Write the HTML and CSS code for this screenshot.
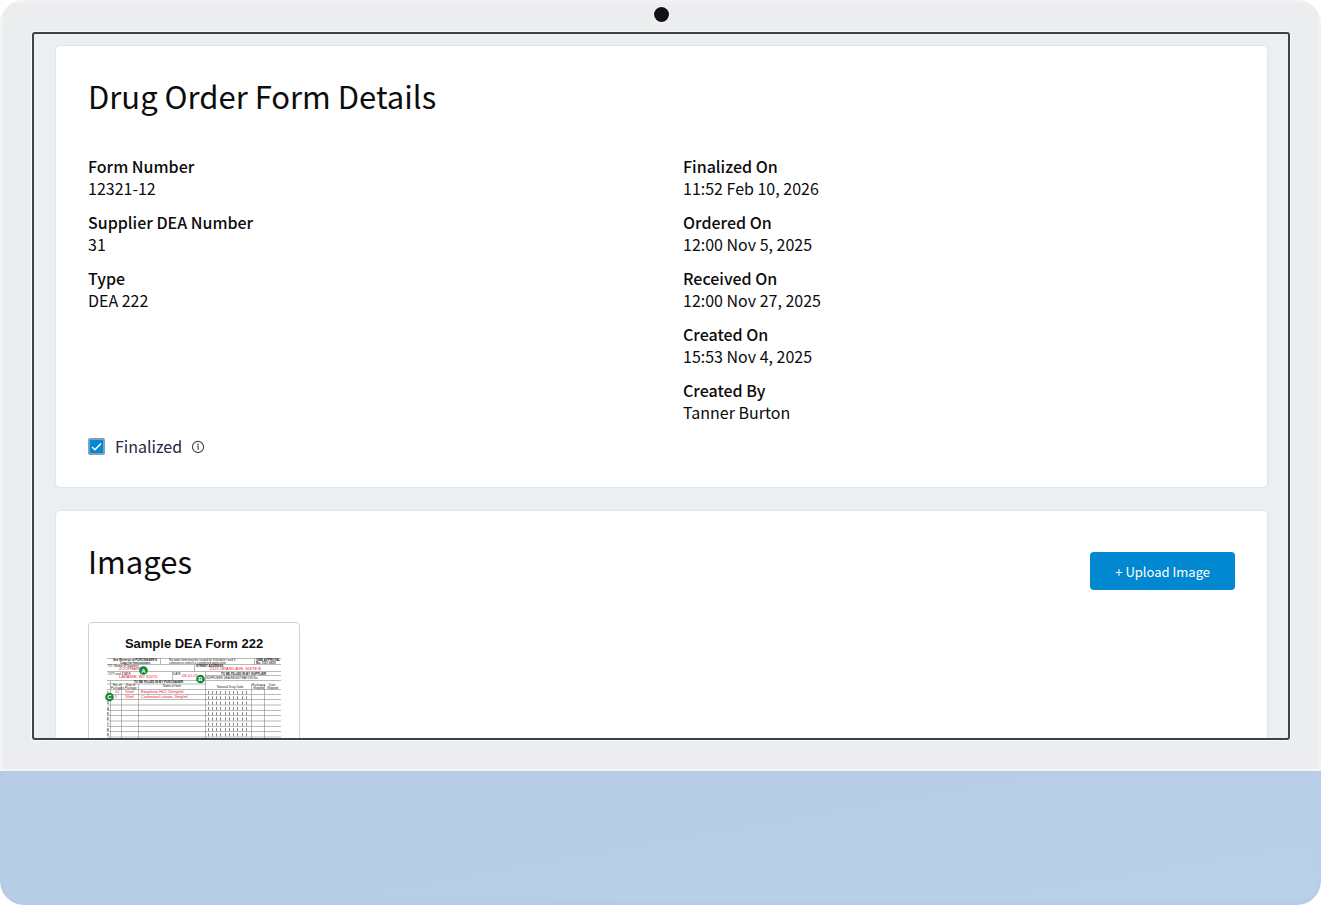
FILE: index.html
```html
<!DOCTYPE html>
<html lang="en">
<head>
    <meta charset="UTF-8">
    <meta name="viewport" content="width=device-width, initial-scale=1.0">
    <title>Drug Order Form Details</title>
    <link rel="stylesheet" href="styles.css">
</head>
<body>
    <div class="monitor">
        <div class="bezel">
            <div class="camera-bar"><span class="camera"></span></div>

            <main class="screen">
                <section class="card details">
                    <h1 class="card-title">Drug Order Form Details</h1>

                    <div class="detail-columns">
                        <dl class="detail-list">
                            <div><dt>Form Number</dt><dd>12321-12</dd></div>
                            <div><dt>Supplier DEA Number</dt><dd>31</dd></div>
                            <div><dt>Type</dt><dd>DEA 222</dd></div>
                        </dl>
                        <dl class="detail-list">
                            <div><dt>Finalized On</dt><dd>11:52 Feb 10, 2026</dd></div>
                            <div><dt>Ordered On</dt><dd>12:00 Nov 5, 2025</dd></div>
                            <div><dt>Received On</dt><dd>12:00 Nov 27, 2025</dd></div>
                            <div><dt>Created On</dt><dd>15:53 Nov 4, 2025</dd></div>
                            <div><dt>Created By</dt><dd>Tanner Burton</dd></div>
                        </dl>
                    </div>

                    <div class="finalized">
                        <input type="checkbox" id="finalized" class="checkbox" checked>
                        <label for="finalized">Finalized</label>
                        <svg class="info-icon" viewBox="0 0 14 14" aria-hidden="true">
                            <circle cx="7" cy="7" r="5.6" fill="none" stroke="#444" stroke-width="1.1"/>
                            <circle cx="7" cy="4.4" r="0.8" fill="#444"/>
                            <path d="M6.2 6.4H7.1V10" fill="none" stroke="#444" stroke-width="1.1"/>
                        </svg>
                    </div>
                </section>

                <section class="card images">
                    <header class="images-header">
                        <h2 class="card-title">Images</h2>
                        <button type="button" class="upload-button">+ Upload Image</button>
                    </header>

                    <a href="#" class="thumbnail">
                        <svg viewBox="0 0 210 270" role="img" aria-label="Sample DEA Form 222">
                            <text class="form-title" x="105" y="25" text-anchor="middle">Sample DEA Form 222</text>

                            <!-- header rules -->
                            <g class="rule">
                                <path d="M18 35.5H192M18 41.5H192M18 48.5H192M18 57.5H192M116 52.5H192M18 61H116M18 66.5H192"/>
                                <path d="M71.5 35.5V41.5M165.5 35.5V41.5M105.5 41.5V48.5M83.5 48.5V57.5M116.5 48.5V57.5"/>
                            </g>

                            <!-- order lines -->
                            <g class="rule">
                                <path d="M18 71.5H192M18 76.5H192M18 82H192M18 87.5H192M18 92.5H192M18 98H192M18 103.5H192M18 108.5H192M18 114H192M18 119.5H192"/>
                                <path d="M21.5 57.5V122M32.5 61V122M49.5 61V122M116.5 57.5V122M162.5 61V122M175.5 61V122"/>
                            </g>
                            <path class="ticks" d="M119.5 68V122M123.5 68V122M127.5 68V122M131.5 68V122M136.5 68V122M140.5 68V122M144.5 68V122M148.5 68V122M153.5 68V122M157.5 68V122"/>

                            <g class="print bold">
                                <text x="24" y="38">See Reverse of PURCHASER'S</text>
                                <text x="31" y="41">Copy for Instructions</text>
                                <text x="167" y="38">OMB APPROVAL</text>
                                <text x="167" y="41">No. 1117-0010</text>
                                <text x="107" y="44">STREET ADDRESS</text>
                                <text x="45" y="60">TO BE FILLED IN BY PURCHASER</text>
                                <text x="132" y="52">TO BE FILLED IN BY SUPPLIER</text>
                            </g>
                            <g class="print">
                                <text x="80" y="38">No order form may be issued for Schedule I and II</text>
                                <text x="80" y="41">substances unless a completed application</text>
                                <text x="19" y="44">TO: (Name of Supplier)</text>
                                <text x="19" y="52">CITY and STATE</text>
                                <text x="84" y="52">DATE</text>
                                <text x="117" y="56">SUPPLIERS DEA REGISTRATION No.</text>
                                <text x="24" y="63">No. of</text>
                                <text x="22" y="66">Packages</text>
                                <text x="37" y="63">Size of</text>
                                <text x="36" y="66">Package</text>
                                <text x="74" y="64">Name of Item</text>
                                <text x="128" y="65">National Drug Code</text>
                                <text x="163" y="63">Packages</text>
                                <text x="164" y="66">Shipped</text>
                                <text x="180" y="63">Date</text>
                                <text x="178" y="66">Shipped</text>
                            </g>
                            <g class="print bold">
                                <text x="18" y="71">1</text>
                                <text x="18" y="76">2</text>
                                <text x="18" y="81">3</text>
                                <text x="18" y="87">4</text>
                                <text x="18" y="92">5</text>
                                <text x="18" y="97">6</text>
                                <text x="18" y="103">7</text>
                                <text x="18" y="108">8</text>
                                <text x="18" y="113">9</text>
                            </g>

                            <g class="entry">
                                <text x="30" y="47">ZOOPHARM</text>
                                <text x="121" y="47">2121 GRAND AVE, SUITE B</text>
                                <text x="30" y="55">LARAMIE, WY  82070</text>
                                <text x="93" y="54">08-01-05</text>
                                <text x="26" y="70">12</text>
                                <text x="36" y="70">10ml</text>
                                <text x="52" y="70">Etorphine HCl, 10mg/ml</text>
                                <text x="26" y="75">5</text>
                                <text x="36" y="75">10ml</text>
                                <text x="52" y="75">Carfentanil citrate, 3mg/ml</text>
                            </g>

                            <g class="marker">
                                <circle cx="54.5" cy="47.5" r="4.3"/>
                                <circle cx="111.5" cy="56" r="4.3"/>
                                <circle cx="20.5" cy="74" r="4.3"/>
                                <text x="54.5" y="49.6">A</text>
                                <text x="111.5" y="58.1">B</text>
                                <text x="20.5" y="76.1">C</text>
                            </g>
                        </svg>
                    </a>
                </section>
            </main>
        </div>
        <div class="chin"></div>
    </div>
</body>
</html>
```
FILE: styles.css
```css
* {
    box-sizing: border-box;
}

body {
    margin: 0;
    background: #fff;
    color: #0c0c0c;
    font-family: "Noto Sans CJK SC", "Noto Sans", sans-serif;
    font-size: 16px;
    line-height: 22px;
}

/* Monitor frame */
.monitor {
    display: flex;
    flex-direction: column;
    height: 100vh;
    border-radius: 24px;
    overflow: hidden;
}

.bezel {
    flex: 1;
    min-height: 0;
    display: flex;
    flex-direction: column;
    padding: 0 31px 31px 32px;
    background: #ecedef;
    box-shadow: inset 0 0 4px 1px #f8f9fb;
}

.camera-bar {
    flex: none;
    display: flex;
    align-items: center;
    justify-content: center;
    height: 32px;
    padding-bottom: 4px;
}

.camera {
    width: 15px;
    height: 15px;
    border-radius: 50%;
    background: #111316;
    box-shadow: 0 0 0 1px #fafafa;
}

.screen {
    flex: 1;
    min-height: 0;
    overflow: hidden;
    padding: 11px 20px 0 21px;
    background: #ebeff2;
    border: 2px solid #39434c;
    border-radius: 3px;
    box-shadow: 0 0 0 1px #f8f9fa;
}

.chin {
    flex: none;
    height: 134px;
    border-radius: 0 0 24px 24px;
    background: linear-gradient(170deg, #b7cce5 0%, #b8cee6 50%, #bbd0e9 100%);
    box-shadow: inset 0 -1px 3px 1px #b3cbea;
}

/* Cards */
.card {
    padding: 32px 32px 29px;
    margin-bottom: 22px;
    background: #fff;
    border: 1px solid #dfe5e9;
    border-radius: 5px;
}

.card-title {
    margin: 0;
    font-size: 31px;
    font-weight: 400;
    line-height: 36px;
}

.detail-columns {
    display: grid;
    grid-template-columns: 1fr 1fr;
    gap: 43px;
    margin: 41px 0 11px;
}

.detail-list {
    display: flex;
    flex-direction: column;
    gap: 12px;
    margin: 0;
}

.detail-list dt {
    font-weight: 500;
}

.detail-list dd {
    margin: 0;
}

.finalized {
    display: flex;
    align-items: center;
    height: 24px;
    color: #23283f;
}

.checkbox {
    appearance: none;
    width: 17px;
    height: 17px;
    margin: 0 10px 0 0;
    border: 2px solid #7ba0c0;
    border-radius: 2px;
    background: #fff;
}

.checkbox:checked {
    background: #0787d0 url("data:image/svg+xml,%3Csvg xmlns='http://www.w3.org/2000/svg' viewBox='0 0 13 13'%3E%3Cpath d='M2 7l3 2.8 6-6.3' fill='none' stroke='%23fff' stroke-width='1.4'/%3E%3C/svg%3E") center / 13px no-repeat;
}

.info-icon {
    width: 14px;
    height: 14px;
    margin: 2px 0 0 9px;
}

/* Images */
.images-header {
    display: flex;
    justify-content: space-between;
    height: 47px;
    margin-bottom: 32px;
}

.upload-button {
    align-self: flex-end;
    height: 38px;
    padding: 0 25px;
    border: 0;
    border-radius: 4px;
    background: #0288d1;
    color: #fff;
    font-family: inherit;
    font-size: 13px;
    cursor: pointer;
}

.thumbnail {
    display: block;
    width: 212px;
    border: 1px solid #cfd2d4;
    border-radius: 4px;
    overflow: hidden;
}

.thumbnail svg {
    display: block;
    font-family: "Liberation Sans", Arial, sans-serif;
}

.form-title {
    font-size: 13px;
    font-weight: 700;
    fill: #111;
}

.rule {
    fill: none;
    stroke: #888;
    stroke-width: 0.6;
}

.ticks {
    fill: none;
    stroke: #555;
    stroke-width: 0.7;
    stroke-dasharray: 3 2.3;
}

.print {
    font-size: 3px;
    fill: #222;
}

.bold {
    font-weight: 700;
}

.entry {
    font-size: 4px;
    fill: #f01030;
}

.marker {
    fill: #108a35;
    font-size: 6px;
    font-weight: 700;
    text-anchor: middle;
}

.marker text {
    fill: #fff;
}
```
